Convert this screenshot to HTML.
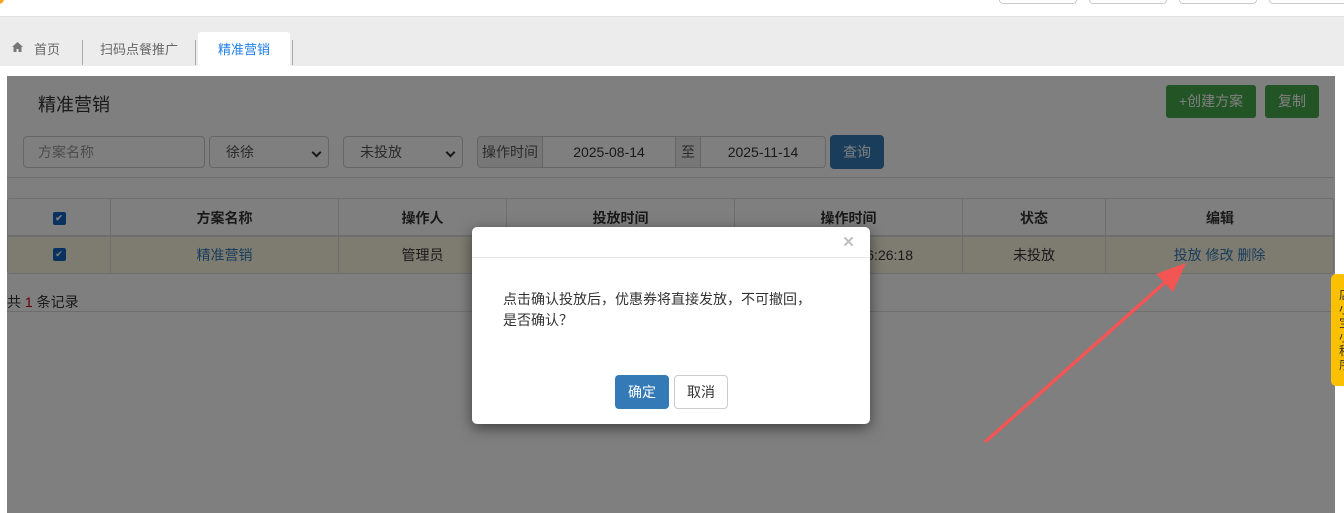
<!DOCTYPE html>
<html><head><meta charset="utf-8"><style>
*{box-sizing:border-box;margin:0;padding:0}
body{width:1344px;height:513px;overflow:hidden;position:relative;background:#fff;font-family:"Liberation Sans","Noto Sans CJK SC",sans-serif;font-size:14px;color:#333}
.a{position:absolute}
.tb{border:1px solid #ccc;border-top:none;border-radius:0 0 4px 4px;height:4px;top:0;width:78px}
.inp{position:absolute;top:136px;height:32px;border:1px solid #ccc;border-radius:4px;background:#fff;font-size:14px;line-height:30px;padding-left:14px;color:#555}
.th,.td{position:absolute;text-align:center;border-left:1px solid #ddd;font-size:14px}
.th{top:198px;height:38px;line-height:40px;font-weight:bold}
.td{top:237px;height:36px;line-height:36px;background:#fcf8e3}
.cb{display:inline-block;width:13px;height:13px;background:#1565c0;border-radius:2px;color:#fff;font-size:9px;line-height:13px;vertical-align:middle}
.ar{position:absolute;right:8px;top:12px;width:7px;height:7px;border-right:2px solid #333;border-bottom:2px solid #333;transform:rotate(45deg)}
</style></head><body>
<div class="a" style="left:-6px;top:-6px;width:10px;height:10px;border-radius:50%;background:#f5a623"></div>
<div class="a tb" style="left:999px"></div><div class="a tb" style="left:1089px"></div><div class="a tb" style="left:1179px"></div><div class="a tb" style="left:1269px;width:80px"></div>
<div class="a" style="left:0;top:16px;width:1344px;height:50px;background:#ececec;border-top:1px solid #e2e2e2"></div>
<svg class="a" style="left:12px;top:42px" width="11" height="10" viewBox="0 0 11 10"><path d="M5.5 0 L11 5 L9.5 5 L9.5 10 L6.5 10 L6.5 7 L4.5 7 L4.5 10 L1.5 10 L1.5 5 L0 5 Z" fill="#777"/></svg>
<div class="a" style="left:34px;top:39px;font-size:13px;color:#666">首页</div>
<div class="a" style="left:82px;top:40px;width:1px;height:25px;background:#aaa"></div>
<div class="a" style="left:100px;top:39px;font-size:13px;color:#666">扫码点餐推广</div>
<div class="a" style="left:195px;top:40px;width:1px;height:25px;background:#aaa"></div>
<div class="a" style="left:198px;top:32px;width:92px;height:34px;background:#fff;border-radius:3px 3px 0 0"></div>
<div class="a" style="left:218px;top:39px;font-size:13px;color:#1e7fe8">精准营销</div>
<div class="a" style="left:292px;top:40px;width:1px;height:25px;background:#aaa"></div>

<div class="a" style="left:7px;top:76px;width:1328px;height:437px;background:#fff"></div>
<div class="a" style="left:38px;top:91px;font-size:18px;color:#333">精准营销</div>
<div class="a" style="left:1166px;top:85px;width:90px;height:33px;background:#46a84d;border-radius:3px;color:#fff;line-height:33px;text-align:center">+创建方案</div>
<div class="a" style="left:1265px;top:85px;width:54px;height:33px;background:#46a84d;border-radius:3px;color:#fff;line-height:33px;text-align:center">复制</div>
<div class="inp" style="left:23px;width:182px;color:#999">方案名称</div>
<div class="inp" style="left:209px;width:120px;padding-left:16px">徐徐<span class="ar"></span></div>
<div class="inp" style="left:343px;width:120px;padding-left:16px">未投放<span class="ar"></span></div>
<div class="inp" style="left:477px;width:66px;padding-left:4px;background:#eee;border-radius:4px 0 0 4px">操作时间</div>
<div class="inp" style="left:542px;width:134px;border-radius:0;text-align:center;padding:0;color:#333">2025-08-14</div>
<div class="inp" style="left:675px;width:26px;border-radius:0;background:#eee;padding-left:5px">至</div>
<div class="inp" style="left:700px;width:126px;border-radius:0 4px 4px 0;text-align:center;padding:0;color:#333">2025-11-14</div>
<div class="a" style="left:830px;top:135px;width:54px;height:34px;background:#337ab7;border-radius:4px;color:#fff;line-height:34px;text-align:center">查询</div>
<div class="a" style="left:7px;top:177px;width:1327px;height:1px;background:#ddd"></div>
<div class="a" style="left:7px;top:198px;width:1327px;height:76px;border:1px solid #ddd;border-radius:3px"></div>
<div class="a" style="left:7px;top:235px;width:1327px;height:2px;background:#ddd"></div>
<div class="th" style="left:8px;width:102px;border:none;line-height:38px"><span class="cb">✔</span></div>
<div class="th" style="left:110px;width:228px">方案名称</div>
<div class="th" style="left:338px;width:168px">操作人</div>
<div class="th" style="left:506px;width:228px">投放时间</div>
<div class="th" style="left:734px;width:228px">操作时间</div>
<div class="th" style="left:962px;width:143px">状态</div>
<div class="th" style="left:1105px;width:229px">编辑</div>
<div class="td" style="left:8px;width:102px;border:none;line-height:33px"><span class="cb">✔</span></div>
<div class="td" style="left:110px;width:228px;color:#337ab7">精准营销</div>
<div class="td" style="left:338px;width:168px">管理员</div>
<div class="td" style="left:506px;width:228px"></div>
<div class="td" style="left:734px;width:228px">2025-11-14 16:26:18</div>
<div class="td" style="left:962px;width:143px">未投放</div>
<div class="td" style="left:1105px;width:228px;color:#337ab7">投放 修改 删除</div>
<div class="a" style="left:7px;top:292px;font-size:14px">共 <span style="color:#c00">1</span> 条记录</div>
<div class="a" style="left:7px;top:311px;width:1327px;height:1px;background:#ddd"></div>

<div class="a" style="left:7px;top:76px;width:1328px;height:437px;background:rgba(0,0,0,.5)"></div>

<div class="a" style="left:472px;top:227px;width:398px;height:197px;background:#fff;border-radius:5px;box-shadow:0 4px 14px rgba(0,0,0,.5)"></div>
<div class="a" style="left:472px;top:257px;width:398px;height:1px;background:#e5e5e5"></div>
<div class="a" style="left:843px;top:232px;font-size:19px;font-weight:bold;color:#c0c0c0">×</div>
<div class="a" style="left:503px;top:289px;font-size:14px;line-height:21px;color:#333">点击确认投放后，优惠券将直接发放，不可撤回，<br>是否确认？</div>
<div class="a" style="left:615px;top:375px;width:54px;height:34px;background:#337ab7;border-radius:4px;color:#fff;line-height:34px;text-align:center;font-size:14px">确定</div>
<div class="a" style="left:674px;top:375px;width:54px;height:34px;background:#fff;border:1px solid #ccc;border-radius:4px;line-height:32px;text-align:center;font-size:14px">取消</div>

<svg class="a" style="left:0;top:0" width="1344" height="513"><line x1="985" y1="442" x2="1170" y2="278" stroke="#f35454" stroke-width="3.5"/><polygon points="1186,263 1156,274 1173,292" fill="#f35454"/></svg>

<div class="a" style="left:1331px;top:274px;width:20px;height:112px;background:#fbc000;border-radius:5px 0 0 5px;overflow:hidden;font-size:12px;line-height:14px;padding:14px 0 0 8px;color:#333">店<br>小<br>宝<br>小<br>程<br>序</div>
</body></html>
